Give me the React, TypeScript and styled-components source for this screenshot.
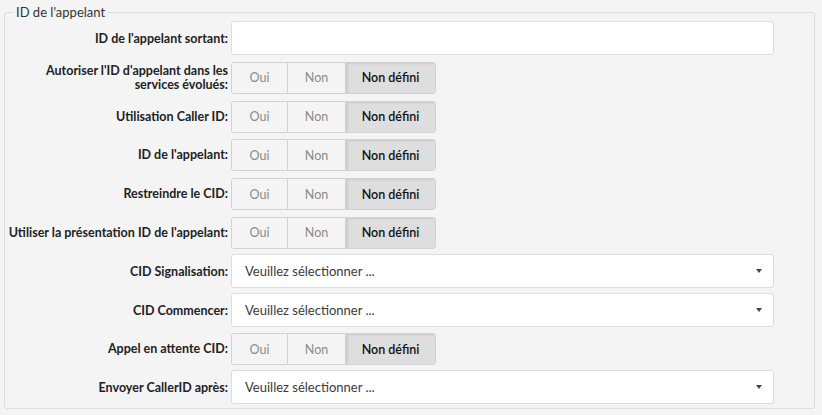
import React from "react";
import styled, { createGlobalStyle } from "styled-components";

const GlobalStyle = createGlobalStyle`
  html, body {
    margin: 0;
    padding: 0;
    background: #f4f4f4;
  }
  body {
    font-family: Lato, "Open Sans", "Liberation Sans", sans-serif;
    font-size: 13px;
    color: #222;
  }
`;

const Page = styled.div`
  padding: 4px 7px 0 4px;
`;

const Fieldset = styled.fieldset`
  margin: 0;
  padding: 1px 40px 4px 0;
  border: 1px solid #dcdcdc;
  border-radius: 3px;
  min-width: 0;
`;

const Legend = styled.legend`
  margin-left: 8px;
  padding: 0 3px;
  font-size: 13px;
  line-height: 16px;
  color: #333;
`;

const Rows = styled.div`
  display: flex;
  flex-direction: column;
  gap: 4.8px;
`;

const Row = styled.div`
  display: grid;
  grid-template-columns: 223px 1fr;
  column-gap: 3px;
  align-items: center;
  min-height: 34px;
`;

const Label = styled.label`
  text-align: right;
  font-weight: 700;
  font-size: 12.5px;
  line-height: 14px;
  color: #222;
  padding-top: 2px;
`;

const TextInput = styled.input`
  box-sizing: border-box;
  height: 34px;
  width: 100%;
  border: 1px solid #dcdcdc;
  border-radius: 3px;
  background: #fff;
  padding: 0 12px;
  font: inherit;
  outline: none;
`;

const Toggle = styled.div`
  display: flex;
  align-self: end;
  height: 32px;
  width: max-content;
  border: 1px solid #d2d2d2;
  border-radius: 3px;
  overflow: hidden;
  box-sizing: border-box;
`;

const ToggleOption = styled.button<{ $w: number; $active?: boolean }>`
  width: ${(p) => p.$w}px;
  border: 0;
  border-left: 1px solid #d2d2d2;
  &:first-child {
    border-left: 0;
  }
  background: ${(p) => (p.$active ? "#dedede" : "#f4f4f4")};
  box-shadow: ${(p) => (p.$active ? "inset 2px 1px 2px rgba(0,0,0,0.08)" : "none")};
  color: ${(p) => (p.$active ? "#111" : "#8a8a8a")};
  font-family: inherit;
  font-size: 12.5px;
  font-weight: ${(p) => (p.$active ? 600 : 400)};
  padding: 0;
  cursor: pointer;
`;

const Select = styled.div`
  position: relative;
  box-sizing: border-box;
  height: 34px;
  width: 100%;
  display: flex;
  align-items: center;
  border: 1px solid #dcdcdc;
  border-radius: 3px;
  background: #fff;
  padding: 0 13px;
  color: #3a3a3a;
  font-size: 13px;
`;

const Caret = styled.span`
  position: absolute;
  right: 11px;
  top: 50%;
  margin-top: -2px;
  width: 0;
  height: 0;
  border-left: 3.5px solid transparent;
  border-right: 3.5px solid transparent;
  border-top: 4px solid #444;
`;

type Field =
  | { kind: "input"; label: string }
  | { kind: "toggle"; label: string }
  | { kind: "select"; label: string };

const fields: Field[] = [
  { kind: "input", label: "ID de l'appelant sortant:" },
  { kind: "toggle", label: "Autoriser l'ID d'appelant dans les services évolués:" },
  { kind: "toggle", label: "Utilisation Caller ID:" },
  { kind: "toggle", label: "ID de l'appelant:" },
  { kind: "toggle", label: "Restreindre le CID:" },
  { kind: "toggle", label: "Utiliser la présentation ID de l'appelant:" },
  { kind: "select", label: "CID Signalisation:" },
  { kind: "select", label: "CID Commencer:" },
  { kind: "toggle", label: "Appel en attente CID:" },
  { kind: "select", label: "Envoyer CallerID après:" },
];

function TriState() {
  return (
    <Toggle>
      <ToggleOption $w={55}>Oui</ToggleOption>
      <ToggleOption $w={58}>Non</ToggleOption>
      <ToggleOption $w={90} $active>
        Non défini
      </ToggleOption>
    </Toggle>
  );
}

export default function App() {
  return (
    <>
      <GlobalStyle />
      <Page>
        <Fieldset>
          <Legend>ID de l'appelant</Legend>
          <Rows>
            {fields.map((f, i) => (
              <Row key={i}>
                <Label>{f.label}</Label>
                {f.kind === "input" && <TextInput type="text" />}
                {f.kind === "toggle" && <TriState />}
                {f.kind === "select" && (
                  <Select>
                    Veuillez sélectionner ...
                    <Caret />
                  </Select>
                )}
              </Row>
            ))}
          </Rows>
        </Fieldset>
      </Page>
    </>
  );
}
